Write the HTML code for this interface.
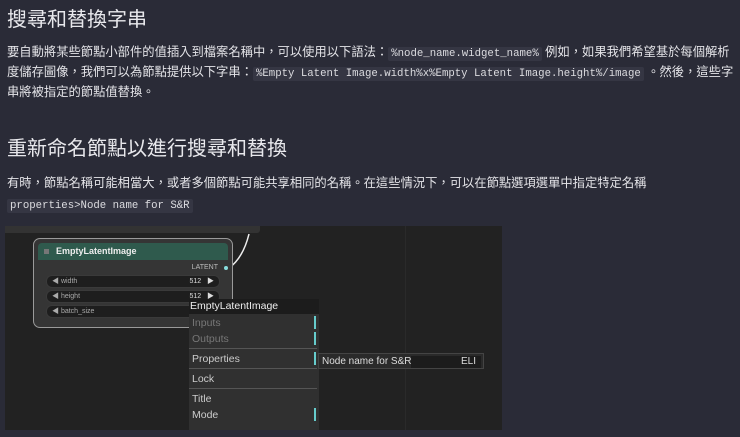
<!DOCTYPE html>
<html><head><meta charset="utf-8"><style>
body{margin:0;width:740px;height:437px;background:#2a2b37;color:#e4e4e8;font-family:"Liberation Sans","Noto Sans CJK TC",sans-serif;overflow:hidden;position:relative}
.a{position:absolute;white-space:nowrap}
h1{margin:0;font-weight:400;font-size:20px;color:#e8e8ec}
.p{font-size:12.3px;line-height:19.5px}
code{font-family:"Liberation Mono",monospace;font-size:10.7px;background:#353643;padding:1px 3px;border-radius:2px;color:#dcdce0}
.img{left:5px;top:226px;width:497px;height:204px;background:#222;overflow:hidden}
.node{left:33px;top:238px;width:198px;height:88px;border:1.5px solid #9a9a9a;border-radius:7px;background:#353535}
.nh{position:absolute;left:4px;top:4px;right:4px;height:17px;background:#2f5a4d;border-radius:4px 4px 0 0;color:#eee;font-size:9px;line-height:17px;padding-left:18px;font-weight:bold}
.w{position:absolute;left:12px;width:172px;height:11px;border-radius:6px;background:#1e1e1e;border:1px solid #3a3a3a;color:#aaa;font-size:7px;line-height:11px}
.menu{left:189px;top:299px;width:130px;height:131px;background:#303030;font-size:10.5px;color:#ccc;overflow:hidden}
.mi{position:absolute;left:3px}
.sep{position:absolute;left:0;width:128px;height:1px;background:#555}
.bar{position:absolute;left:125px;width:2px;background:#6cc;height:13px}
</style></head><body>
<div class="a" style="left:7px;top:3px"><h1>搜尋和替換字串</h1></div>
<div class="a p" style="left:7px;top:43px">要自動將某些節點小部件的值插入到檔案名稱中，可以使用以下語法：<code>%node_name.widget_name%</code> 例如，如果我們希望基於每個解析</div>
<div class="a p" style="left:7px;top:63px">度儲存圖像，我們可以為節點提供以下字串：<code>%Empty Latent Image.width%x%Empty Latent Image.height%/image</code> 。然後，這些字</div>
<div class="a p" style="left:7px;top:83px">串將被指定的節點值替換。</div>
<div class="a" style="left:7px;top:132px"><h1>重新命名節點以進行搜尋和替換</h1></div>
<div class="a p" style="left:7px;top:174px">有時，節點名稱可能相當大，或者多個節點可能共享相同的名稱。在這些情況下，可以在節點選項選單中指定特定名稱</div>
<div class="a p" style="left:7px;top:195px"><code>properties&gt;Node name for S&amp;R</code></div>
<div class="a img">
 <div style="position:absolute;left:0;top:0;width:255px;height:7px;background:#333;border-radius:0 0 3px 0"></div>
 <div style="position:absolute;left:400px;top:0;width:1px;height:204px;background:#2a2a2a"></div>
 <svg style="position:absolute;left:0;top:0" width="497" height="204"><path d="M224 42 Q238 32 244 8" stroke="#eee" stroke-width="1.5" fill="none"/></svg>
</div>
<div class="a node">
 <div class="nh"><span style="position:absolute;left:6px;top:6px;width:5px;height:5px;background:#777"></span>EmptyLatentImage</div>
 <div style="position:absolute;right:14px;top:25px;font-size:7px;color:#bbb">LATENT</div>
 <div style="position:absolute;right:4px;top:27px;width:4px;height:4px;border-radius:2px;background:#8dd"></div>
 <div class="w" style="top:36px"><span style="padding-left:5px">◀ width</span><span style="position:absolute;right:5px;color:#ddd">512 &nbsp; ▶</span></div>
 <div class="w" style="top:51px"><span style="padding-left:5px">◀ height</span><span style="position:absolute;right:5px;color:#ddd">512 &nbsp; ▶</span></div>
 <div class="w" style="top:66px"><span style="padding-left:5px">◀ batch_size</span></div>
</div>
<div class="a menu">
 <div style="position:absolute;left:0;top:0;width:130px;height:15px;background:#1c1c1c;color:#eee;padding-left:1px;line-height:15px">EmptyLatentImage</div>
 <div class="mi" style="top:18px;color:#777">Inputs</div><div class="bar" style="top:17px"></div>
 <div class="mi" style="top:34px;color:#777">Outputs</div><div class="bar" style="top:33px"></div>
 <div class="sep" style="top:49px"></div>
 <div class="mi" style="top:54px">Properties</div><div class="bar" style="top:53px"></div>
 <div class="sep" style="top:69px"></div>
 <div class="mi" style="top:74px">Lock</div>
 <div class="sep" style="top:89px"></div>
 <div class="mi" style="top:94px">Title</div>
 <div class="mi" style="top:110px">Mode</div><div class="bar" style="top:109px"></div>
</div>
<div class="a" style="left:318px;top:353px;width:166px;height:16px;background:#2a2a2a;border:1px solid #444;font-size:10px;color:#ddd;line-height:16px;padding-left:3px;box-sizing:border-box">Node name for S&amp;R<span style="position:absolute;left:92px;top:2px;width:70px;height:12px;background:#1c1c1c"></span><span style="position:absolute;left:142px">ELI</span></div>
</body></html>
